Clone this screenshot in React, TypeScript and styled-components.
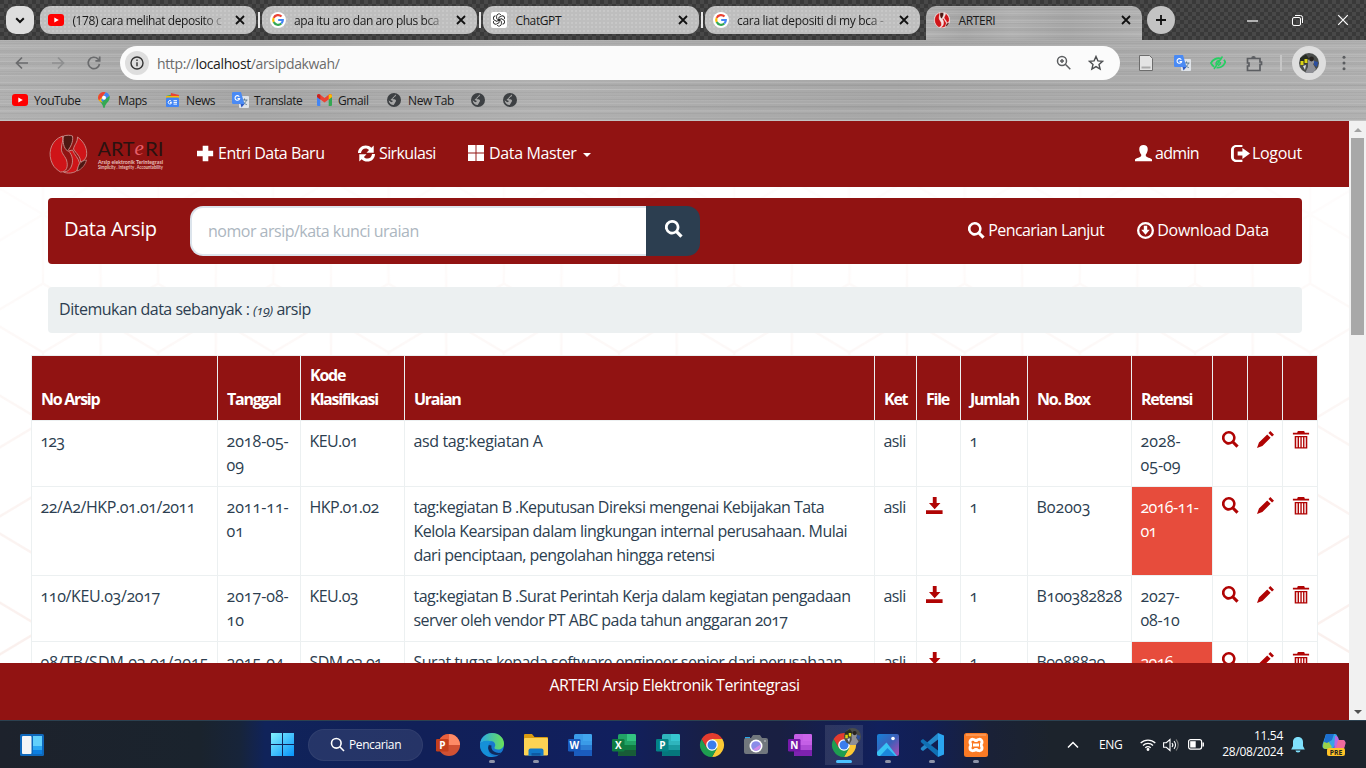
import React from "react";
import styled, { createGlobalStyle, css } from "styled-components";

const RED = "#911312";
const UI = `"Open Sans", "Noto Sans", sans-serif`;

const Global = createGlobalStyle`
  * { box-sizing: border-box; }
  html, body { margin: 0; padding: 0; overflow: hidden; }
  svg { display: block; flex: none; }
`;

const Screen = styled.div`
  width: 1366px;
  height: 768px;
  display: flex;
  flex-direction: column;
  overflow: hidden;
  font-family: ${UI};
`;

const brushed = css`
  background-color: #acacac;
  background-image:
    repeating-linear-gradient(180deg, rgba(255,255,255,.10) 0 1px, transparent 1px 3px, rgba(0,0,0,.04) 3px 4px, transparent 4px 7px),
    repeating-linear-gradient(180deg, rgba(0,0,0,.03) 0 2px, transparent 2px 5px, rgba(255,255,255,.07) 5px 6px, transparent 6px 11px),
    linear-gradient(90deg, rgba(255,255,255,.06), rgba(0,0,0,.03) 18%, rgba(255,255,255,.05) 40%, rgba(0,0,0,.03) 65%, rgba(255,255,255,.06));
`;

/* ---------- browser chrome ---------- */
const TabStrip = styled.div`
  height: 40px;
  flex: none;
  display: flex;
  padding: 6px 0 0 6px;
  background-color: #3b3b3b;
  background-image: conic-gradient(#484848 25%, #393939 0 50%, #484848 0 75%, #393939 0);
  background-size: 8px 8px;
`;
const RoundButton = styled.div<{ $round?: boolean }>`
  width: 28px;
  height: 28px;
  border-radius: ${p => (p.$round ? 14 : 10)}px;
  margin-left: ${p => (p.$round ? 5 : 0)}px;
  background: ${p => (p.$round ? "#c3c3c3" : "#dedede")};
  display: flex;
  align-items: center;
  justify-content: center;
`;
const Tab = styled.div<{ $active?: boolean; $sep?: boolean }>`
  position: relative;
  flex: none;
  width: 215.500px;
  height: ${p => (p.$active ? 34 : 28)}px;
  margin-left: 6px;
  padding: 0 11px ${p => (p.$active ? 6 : 0)}px 8px;
  display: flex;
  align-items: center;
  gap: 8px;
  font-size: 12px;
  color: #1a1a1a;
  border-radius: ${p => (p.$active ? "10px 10px 0 0" : "11px")};
  ${p => p.$active ? brushed : css`
    background: radial-gradient(circle at 1px 1px, #c8c8c8 .7px, transparent 1px) 0 0 / 4px 4px #bebebe;
  `}
  ${p => p.$sep && css`&::after {
    content: "";
    position: absolute;
    right: -4px;
    top: 6px;
    width: 2px;
    height: 16px;
    background: #e8e8e8;
  }`}
`;
const TabTitle = styled.span<{ $fade?: boolean; $ls?: number }>`
  flex: 1;
  white-space: nowrap;
  padding-left: 0.500px;
  letter-spacing: ${p => p.$ls ?? -0.4}px;
  ${p => p.$fade && css`mask-image: linear-gradient(90deg, #000 85%, transparent);`}
`;
const WinControls = styled.div`
  margin-left: auto;
  display: flex;
  align-items: center;
  gap: 34px;
  padding-right: 17px;
  height: 28px;
`;
const Chrome = styled.div`
  ${brushed}
  height: 81px;
  flex: none;
  border-bottom: 1px solid #c2c2c2;
`;
const Toolbar = styled.div`
  height: 46px;
  display: flex;
  align-items: center;
  padding: 0 0 0 14px;
`;
const NavButtons = styled.div`
  display: flex;
  flex: none;
  gap: 20px;
  width: 106px;
`;
const Omnibox = styled.div`
  width: 1000px;
  flex: none;
  height: 34px;
  border-radius: 17px;
  background: #fbfbfb;
  display: flex;
  align-items: center;
  padding: 0 16px 0 5px;
  font-size: 14px;
  color: #6b6b6b;
  letter-spacing: -0.37px;
  b { font-weight: 400; color: #1b1b1b; }
`;
const SiteInfo = styled.div`
  width: 24px;
  height: 24px;
  border-radius: 50%;
  background: #dedede;
  display: grid;
  place-items: center;
  margin-right: 8px;
`;
const OmniIcons = styled.div`
  margin-left: auto;
  display: flex;
  gap: 16px;
`;
const Extensions = styled.div`
  display: flex;
  align-items: center;
  flex: none;
  margin-left: 18px;
  gap: 19.500px;
`;
const Divider = styled.div`
  width: 2px;
  height: 16px;
  background: #c6c6c6;
  margin-left: -2px;
`;
const Avatar = styled.div`
  width: 34px;
  height: 34px;
  border-radius: 50%;
  background: #dedede;
  display: grid;
  place-items: center;
  margin-left: -10px;
  margin-right: -9px;
`;
const Bookmarks = styled.div`
  height: 28px;
  display: grid;
  grid-template-columns: 86px 67px 67px 85px 70px 84px 32px 32px;
  padding-left: 12px;
  align-items: center;
  font-size: 12px;
  letter-spacing: -0.4px;
  color: #1a1a1a;
`;
const Bookmark = styled.div<{ $gap?: number }>`
  display: flex;
  align-items: center;
  gap: ${p => p.$gap ?? 6}px;
  white-space: nowrap;
`;

/* ---------- page ---------- */
const Viewport = styled.div`
  height: 599px;
  flex: none;
  display: flex;
`;
const Page = styled.div`
  position: relative;
  width: 1349px;
  display: flex;
  flex-direction: column;
  overflow: hidden;
  background: #fff;
  color: #2c3e50;
  font-size: 16px;
  line-height: 24px;
  font-feature-settings: "onum" 1;
`;
const Backdrop = styled.svg`
  position: absolute;
  inset: 0;
`;
const Navbar = styled.nav`
  position: relative;
  height: 66px;
  flex: none;
  background: ${RED};
  color: #fff;
  display: flex;
  align-items: center;
  padding: 0 47px 2px 48px;
`;
const Brand = styled.div`
  width: 149px;
  display: flex;
  padding-top: 2px;
`;
const NavItem = styled.a<{ $w?: number; $ls?: number; $gap?: number }>`
  display: flex;
  align-items: center;
  gap: ${p => p.$gap ?? 4}px;
  white-space: nowrap;
  width: ${p => (p.$w ? p.$w + "px" : "auto")};
  letter-spacing: ${p => p.$ls ?? -0.5}px;
`;
const NavRight = styled.div`
  margin-left: auto;
  display: flex;
`;
const Caret = styled.span`
  border: 4px solid transparent;
  border-top-color: #fff;
  border-bottom: 0;
  margin: 4px 0 0 1px;
`;
const SearchBar = styled.div`
  position: relative;
  height: 66px;
  flex: none;
  margin: 11px 47px 0 48px;
  padding: 0 33px 0 16px;
  border-radius: 4px;
  background: ${RED};
  color: #fff;
  display: flex;
  align-items: center;
`;
const BarLinks = styled(NavRight)`
  padding-bottom: 2px;
`;
const BarTitle = styled.div`
  width: 126px;
  font-size: 20px;
  letter-spacing: -0.4px;
  white-space: nowrap;
  padding-bottom: 4px;
`;
const SearchInput = styled.div`
  width: 456px;
  height: 50px;
  border: 2px solid #dce4ec;
  border-right: 0;
  border-radius: 13px 0 0 13px;
  background: #fff;
  color: #acb6c0;
  padding: 11px 16px;
  letter-spacing: -0.5px;
`;
const SearchButton = styled.div`
  width: 54px;
  height: 50px;
  border-radius: 0 13px 13px 0;
  background: #2c3e50;
  display: flex;
  justify-content: center;
  padding: 14px 0 0 2px;
`;
const Notice = styled.div`
  position: relative;
  height: 46px;
  flex: none;
  margin: 23px 47px 0 48px;
  padding: 10px 11px;
  border-radius: 4px;
  background: #ecf0f1;
  letter-spacing: -0.48px;
  white-space: nowrap;
  i { font-size: 13.500px; }
`;
const Table = styled.div`
  position: relative;
  flex: none;
  width: 1287px;
  margin: 22px 0 0 31px;
  padding: 1px;
  display: grid;
  grid-template-columns: 185px 82px 103px 469px 41px 43px 66px 103px 80px 34px 34px 34px;
  grid-template-rows: 64px 65px 88px 65px 66px;
  gap: 1px;
  background: #ecf0f1;
`;
const HeadCell = styled.div`
  background: ${RED};
  color: #fff;
  font-weight: 700;
  letter-spacing: -1.250px;
  padding: 0 9px 9px;
  display: flex;
  align-items: flex-end;
`;
const Cell = styled.div<{ $overdue?: boolean; $ls?: number }>`
  background: ${p => (p.$overdue ? "#e74c3c" : "#fff")};
  color: ${p => (p.$overdue ? "#fff" : "inherit")};
  padding: 8px 8.500px;
  white-space: pre;
  letter-spacing: ${p => p.$ls ?? -0.6}px;
  overflow: hidden;
`;
const Line = styled.div`
  white-space: pre;
`;
const Footer = styled.footer`
  position: absolute;
  left: 0;
  right: 0;
  bottom: 0;
  height: 57px;
  padding-top: 10px;
  text-align: center;
  background: ${RED};
  color: #fff;
  letter-spacing: -0.43px;
`;
const Scrollbar = styled.div`
  width: 17px;
  background: #f1f1f1;
  display: flex;
  flex-direction: column;
  align-items: center;
  padding: 7px 0 6px;
`;
const Thumb = styled.div`
  width: 13px;
  height: 197px;
  margin: 6px 0 auto;
  background: #a8a8a8;
`;
const Arrow = styled.span<{ $down?: boolean }>`
  border: 4px solid transparent;
  ${p => p.$down ? "border-top-color:#505050;border-bottom:0;" : "border-bottom-color:#a3a3a3;border-top:0;"}
`;

/* ---------- taskbar ---------- */
const Taskbar = styled.div`
  height: 48px;
  flex: none;
  display: flex;
  align-items: center;
  border-top: 1px solid #2c4150;
  color: #fff;
  background: linear-gradient(90deg, #1d222c 0, #1a232d 200px, #17243a 240px, #10235a 265px, #112058 420px, #111f5e 620px, #191f43 720px, #191f42 780px, #11205c 880px, #121f53 930px, #1a2137 990px, #1c232c 1050px);
`;
const Widgets = styled.div`
  padding-left: 20px;
  width: 271px;
`;
const SearchPill = styled.div`
  margin: 0 3px 0 14px;
  width: 115px;
  height: 32px;
  border-radius: 16px;
  background: rgba(255,255,255,.09);
  border: 1px solid rgba(255,255,255,.05);
  display: flex;
  align-items: center;
  padding-left: 21px;
  gap: 4px;
  font-size: 12px;
  letter-spacing: -0.4px;
`;
const TaskApp = styled.div<{ $active?: boolean; $running?: boolean }>`
  position: relative;
  width: 44px;
  height: 47px;
  display: grid;
  place-items: center;
  ${p => p.$active && css`
    background: linear-gradient(rgba(255,255,255,.1), rgba(255,255,255,.1)) center / 38px 40px no-repeat;
  `}
  ${p => (p.$active || p.$running) && css`&::after {
    content: "";
    position: absolute;
    bottom: 5px;
    left: ${p.$active ? 14 : 19}px;
    width: ${p.$active ? 16 : 6}px;
    height: 3px;
    border-radius: 2px;
    background: ${p.$active ? "#4cc2ff" : "#8d93a8"};
  }`}
`;
const Tray = styled.div`
  margin-left: auto;
  display: flex;
  align-items: center;
  font-size: 12px;
  padding-right: 20px;
`;
const Lang = styled.span`
  margin: 0 17px 0 20px;
  letter-spacing: -0.3px;
  font-size: 12px;
  width: 24px;
`;
const Clock = styled.div`
  width: 70px;
  margin: 0 8px 0 9px;
  text-align: right;
  line-height: 16px;
  letter-spacing: -0.3px;
  padding-bottom: 1px;
`;

/* ---------- icons ---------- */
const CloseX = ({ s = 9, c = "#111", w = 1.8 }: { s?: number; c?: string; w?: number }) => (
  <svg width={s} height={s} viewBox="0 0 10 10"><path d="M1 1l8 8M9 1L1 9" stroke={c} strokeWidth={w} /></svg>
);
const YouTube = () => (
  <svg width="16" height="12" viewBox="0 0 16 12"><rect width="16" height="12" rx="3" fill="#f00" /><path d="M6.3 3.4v5.2L10.8 6z" fill="#fff" /></svg>
);
const Google = () => (
  <svg width="16" height="16" viewBox="0 0 16 16">
    <circle cx="8" cy="8" r="8" fill="#fff" />
    <g fill="none" strokeWidth="2.2">
      <path d="M11.5 4.6A4.8 4.8 0 0 0 3.7 5.9" stroke="#ea4335" />
      <path d="M3.7 5.9a4.8 4.8 0 0 0 0 4.2" stroke="#fbbc05" />
      <path d="M3.7 10.1a4.8 4.8 0 0 0 7.6 1.4" stroke="#34a853" />
      <path d="M11.3 11.5A4.6 4.6 0 0 0 12.8 8H8.2" stroke="#4285f4" />
    </g>
  </svg>
);
const OpenAI = () => (
  <svg width="16" height="16" viewBox="0 0 16 16">
    <rect width="16" height="16" rx="2" fill="#fff" />
    <g fill="none" stroke="#222" strokeWidth=".9">
      {[0, 60, 120, 180, 240, 300].map(a => (
        <path key={a} transform={`rotate(${a} 8 8)`} d="M5.6 6.7V4.2a2.4 2.4 0 0 1 4.3-1.4M5.6 6.7l3 1.8" />
      ))}
    </g>
  </svg>
);
const ArteriMark = ({ s = 16, outline = "#fff" }: { s?: number; outline?: string }) => (
  <svg width={s} height={s} viewBox="0 0 40 40">
    {outline === "#fff" && <circle cx="20" cy="20" r="20" fill="#f3e4e2" />}
    <path d="M10 4C2 9-1 20 4 30c2 4 5 6 8 8 6 0 8-5 6-12-2-5-6-7-5-13 0-3 2-6 1-11z" fill="#cf1418" stroke={outline} strokeWidth=".9" />
    <path d="M15 2c3-1 7-1 9 0 1 6-2 11-5 15-4-3-5-9-4-15z" fill="#4d1712" stroke={outline} strokeWidth=".9" />
    <path d="M29 3c7 5 10 12 9 19-1 3-3 5-6 6 0-6-4-8-7-13 1-5 4-6 4-12z" fill="#cf1418" stroke={outline} strokeWidth=".9" />
    <path d="M20 17c4 4 5 10 3 15-1 3-4 6-8 6 4 2 10 1 13-1 1-2 2-5 3-8-1-5-5-8-7-13z" fill="#cf1418" stroke={outline} strokeWidth=".9" />
    <path d="M38 26c-1 5-5 9-9 11 0-6 3-10 9-11z" fill="#4d1712" stroke={outline} strokeWidth=".7" />
  </svg>
);
const Translate = () => (
  <svg width="17" height="16" viewBox="0 0 17 16">
    <rect x="7" y="4" width="10" height="12" rx="1" fill="#dfe3e8" />
    <path d="M9.5 8h6M12.5 6.5V8M14.4 8c-.5 2.2-2 3.8-4 4.6M11 9.4c.7 1.5 2 2.6 3.8 3.2" stroke="#5f7f95" strokeWidth="1" fill="none" />
    <path d="M1.2 0H9l3.4 12H1.2A1.2 1.2 0 0 1 0 10.800V1.200A1.2 1.2 0 0 1 1.200 0z" fill="#4a8af4" />
    <path d="M8.500 12h4L9.500 15.500z" fill="#2f5bc4" />
    <path d="M7.300 4.700A2.300 2.300 0 1 0 7.600 6.500H5.500" fill="none" stroke="#fff" strokeWidth="1.100" />
  </svg>
);
const Maps = () => (
  <svg width="12" height="16" viewBox="0 0 12 16">
    <path d="M1.200 8.500C2.500 10.500 4.800 12 5.300 15.500c.2.700 1.200.700 1.400 0C7.200 12 9.500 10.500 10.800 8.500z" fill="#34a853" />
    <path d="M0 6a6 6 0 0 1 1.500-4L9 8 6 11.500 1.200 9A6 6 0 0 1 0 6z" fill="#fbbc04" />
    <path d="M1.400 2A6 6 0 0 1 7.800.300L4 5z" fill="#ea4335" />
    <path d="M0 6a6 6 0 0 1 1.400-4L4.500 4.500 1 8.500A6 6 0 0 1 0 6z" fill="#ea4335" />
    <path d="M7.800.300A6 6 0 0 1 11.500 3.800L5 11 3 8z" fill="#4285f4" />
    <path d="M11.500 3.800A6 6 0 0 1 10.500 9L6.500 13 4 10z" fill="#34a853" />
    <circle cx="6" cy="5.800" r="2" fill="#fff" />
  </svg>
);
const News = () => (
  <svg width="15" height="14" viewBox="0 0 15 14">
    <path d="M1 3l8-2 1 8-8 2z" fill="#34a853" /><path d="M6 0l8 2-1 8-8-2z" fill="#ea4335" /><path d="M1 3h13v6H1z" fill="#fbbc04" />
    <rect x="1" y="4.500" width="13" height="9.500" rx="1" fill="#4285f4" />
    <path d="M6.300 8.300A1.700 1.700 0 1 0 6.600 9.500H5M8.500 7.700h3.500M8.500 9.400h3.500M8.500 11.100h3.500" stroke="#fff" fill="none" />
  </svg>
);
const Gmail = () => (
  <svg width="15" height="12" viewBox="0 0 15 12">
    <path d="M0 2h3.300v10H1a1 1 0 0 1-1-1z" fill="#4285f4" /><path d="M11.700 2H15v9a1 1 0 0 1-1 1h-2.300z" fill="#34a853" />
    <path d="M0 1.800C0 .200 1.700-.500 3 .500l4.500 3.400L12 .500c1.300-1 3-.300 3 1.300V3L7.500 8.600 0 3z" fill="#ea4335" />
    <path d="M11.700.700C13-.300 15 .200 15 1.800V3l-3.300 2.500z" fill="#fbbc04" /><path d="M3.300.700C2-.300 0 .200 0 1.800V3l3.300 2.500z" fill="#c5221f" />
  </svg>
);
const Globe = () => (
  <svg width="14" height="14" viewBox="0 0 14 14">
    <circle cx="7" cy="7" r="7" fill="#3d4043" />
    <path d="M8.700 1.600c.6 1.200 0 2-1.500 2.300-.1 1.500-1.400 1.200-1.800 2.100.9.700 2.700-.2 3.500 1.200.6 1-.6 1.500-.8 2.600L6.700 12C4 12 2 10.200 1.600 7.300l2.600 1.900 1.400-.4V7.700L3.500 6.900" fill="#b4b4b4" opacity=".9" />
  </svg>
);
const AvatarPic = ({ s = 20 }: { s?: number }) => (
  <svg width={s} height={s} viewBox="0 0 20 20">
    <circle cx="10" cy="10" r="10" fill="#4a4d4b" />
    <path d="M1 5l6-3.500 3 4-2 5H1z" fill="#272c22" /><path d="M1.500 8h3v4h-3zM5.500 6h3v4h-3z" fill="#dcd417" />
    <path d="M9 7l4-2 3 4-2 2 3 5-3 4H6l3-6z" fill="#8f9096" /><circle cx="12.500" cy="6" r="2.400" fill="#26221f" />
    <path d="M15 8l4 1-1 5-3-2z" fill="#2c4fa0" /><path d="M4 13l3-1-1 5z" fill="#d8dde8" />
  </svg>
);

/* page glyphs, all on a 20 unit grid */
const GLYPHS: Record<string, React.ReactNode> = {
  plus: <path d="M6.700 1h6.600v5.700H19v6.600h-5.700V19H6.700v-5.700H0V6.700h6.700z" />,
  refresh: <><path d="M0 9.500C0 4.300 4 .500 9 .500c2.700 0 5 1 6.700 2.700L18.500.500V9H10l3-3C12 4.700 10.700 4 9 4 6 4 4 6.200 3.500 9.500z" /><path d="M20 10.500c0 5.200-4 9-9 9-2.700 0-5-1-6.700-2.700L1.500 19.500V11H10l-3 3c1 1.300 2.300 2 4 2 3 0 5-2.200 5.500-5.500z" /></>,
  grid: <path d="M0 0h9.400v9.400H0zM10.600 0H20v9.400h-9.400zM0 10.600h9.400V20H0zM10.600 10.600H20V20h-9.400z" />,
  user: <path d="M10 0c3 0 5 1.800 5 4.800 0 2.700-1 5-2.300 6.300v1.700c0 .9 6.300 2.800 7.300 4.200V19H0v-2c1-1.400 7.300-3.300 7.300-4.200v-1.700C6 9.800 5 7.500 5 4.800 5 1.800 7 0 10 0z" />,
  logout: <><path d="M12 3.200V1H5C2.500 1 0 3.500 0 6v8c0 2.500 2.500 5 5 5h7v-2.400H5.500C4 16.600 3 15.500 3 14.200V5.800C3 4.500 4 3.200 5.500 3.200z" /><path d="M12 4.300l8 5.700-8 5.700v-3.700H7V8h5z" /></>,
  search: <path fillRule="evenodd" d="M8 0a8 8 0 0 1 6.700 12.300l4.900 4.800-2.600 2.600-4.900-4.900A8 8 0 1 1 8 0zm0 3a5 5 0 1 0 0 10A5 5 0 0 0 8 3z" />,
  downloadCircle: <path fillRule="evenodd" d="M10 0a10 10 0 1 1 0 20 10 10 0 0 1 0-20zm0 2.700a7.300 7.300 0 1 0 0 14.600 7.300 7.300 0 0 0 0-14.600zM8 4.500h4V9h3l-5 6-5-6h3z" />,
  save: <path d="M8 0h4.500v7H17l-6.800 7.500L3.500 7H8zM0 15.500h19.500V20H0z" />,
  pencil: <path d="M2.300 13.500L12 4l4 4-9.700 9.700L0 20zM13.500 2.300L15.700 0 20 4.300l-2.300 2.200z" />,
  trash: <path fillRule="evenodd" d="M6.500 0h7l.8 2H19v2H1V2h4.700zM3 5.500h14V19.500H3zm1.700 1.500v11h1.500V7zm3.100 0v11h1.500V7zm3 0v11h1.500V7zm3 0v11h1.500V7z" />,
};
const Glyph = ({ name, s = 17, c = "currentColor" }: { name: string; s?: number; c?: string }) => (
  <svg width={s} height={s} viewBox="0 0 20 20" fill={c}>{GLYPHS[name]}</svg>
);

const Logo = () => (
  <svg width="120" height="42" viewBox="0 0 120 42" fontFamily="Lato, sans-serif" overflow="visible">
    <svg x="0.500" y="1" width="40" height="40"><ArteriMark s={40} outline="#c98f8b" /></svg>
    <g fontSize="18.500">
      <text x="49.500" y="22.500" fill="#2a1210" textLength="37" lengthAdjust="spacingAndGlyphs">ART</text>
      <text x="86.500" y="21.500" fill="#e6606a" fontStyle="italic" fontSize="21" fontFamily="Liberation Serif, serif">e</text>
      <text x="97" y="22.500" fill="#2a1210" textLength="18.500" lengthAdjust="spacingAndGlyphs">RI</text>
    </g>
    <g fontSize="4.600" fontWeight="700">
      <text x="50" y="30.500" fill="#e8c0bd" textLength="65" lengthAdjust="spacingAndGlyphs">Arsip elektronik Terintegrasi</text>
      <text x="50" y="36" fill="#e8c0bd" textLength="65" lengthAdjust="spacingAndGlyphs">Simplicity . Integrity . Accountability</text>
    </g>
  </svg>
);

/* taskbar artwork */
const Office = ({ letter, dark, cols, round }: { letter: string; dark: string; cols: string[]; round?: boolean }) => (
  <svg width="24" height="22" viewBox="0 0 24 22">
    {round ? (
      <><circle cx="13" cy="11" r="11" fill={cols[2]} /><path d="M13 0a11 11 0 0 1 11 11H13z" fill={cols[0]} /><path d="M13 0v11H2A11 11 0 0 1 13 0z" fill={cols[1]} /></>
    ) : (
      <><rect x="6" width="18" height="22" rx="1.500" fill={cols[1]} /><path d="M15 0h7.500A1.500 1.500 0 0 1 24 1.500V7h-9z" fill={cols[0]} /><path d="M6 11h18v5H6z" fill={cols[2]} /><path d="M6 16h18v4.500a1.500 1.500 0 0 1-1.500 1.500h-15A1.500 1.500 0 0 1 6 20.500z" fill={cols[3]} /></>
    )}
    <rect y="5" width="12.500" height="12.500" rx="1.200" fill={dark} />
    <text x="6.300" y="14.800" textAnchor="middle" fontSize="10" fontWeight="700" fill="#fff">{letter}</text>
  </svg>
);
const Edge = () => (
  <svg width="24" height="24" viewBox="0 0 24 24">
    <defs><linearGradient id="eg" x1="0" x2="1"><stop offset="0" stopColor="#2aa7e8" /><stop offset="1" stopColor="#6be256" /></linearGradient></defs>
    <circle cx="12" cy="12" r="12" fill="#1779cf" />
    <path d="M0 11C1 4 6 0 12 0c7 0 12 5 12 10.500 0 4-3 6-6 6-2.500 0-4-1-3.500-2 2-3 0-6.500-4-6.500C5 8 1 8.500 0 11z" fill="url(#eg)" />
    <path d="M8.500 12c-2 6 3 10 8 10 3 0 5-1.500 6-3-3 1.500-6 1-8.500-.5-2.500-1.700-3-4-2.500-6z" fill="#10295c" />
    <path d="M8.500 12c-2 7 3 12 6 11.600C6 25.500 0 19 0 12c1-3 4-4.200 7-4.200 2 0 3.500.3 4.500 1-1.500.7-2.500 1.700-3 3.200z" fill="#1590d8" />
  </svg>
);
const Explorer = () => (
  <svg width="24" height="22" viewBox="0 0 24 22"><path d="M0 1a1 1 0 0 1 1-1h7l2.500 3H23a1 1 0 0 1 1 1v6H0z" fill="#d99a10" /><rect y="4" width="24" height="17.500" rx="1.200" fill="#fcd354" /><path d="M4.500 16.500a2 2 0 0 1 2-2h11a2 2 0 0 1 2 2v5.200h-15z" fill="#1179c9" /><path d="M7.500 19h9v2.700h-9z" fill="#0d5aa3" /></svg>
);
const ChromeLogo = ({ pic }: { pic?: boolean }) => (
  <svg width="30" height="30" viewBox="-3 -3 30 30" overflow="visible">
    <path d="M12 12V0l10.400 6A12 12 0 0 1 12 24l5-9z" fill="#fcc934" />
    <path d="M1.600 6A12 12 0 0 0 12 24l5.200-9H7z" fill="#1e9e50" /><path d="M1.600 6A12 12 0 0 1 22.400 6H12l-5 9z" fill="#e33b2e" />
    <circle cx="12" cy="12" r="5.800" fill="#fff" /><circle cx="12" cy="12" r="4.500" fill="#3b7ded" />
    {pic && <svg x="12" y="-5" width="17" height="17"><AvatarPic s={17} /></svg>}
  </svg>
);
const Camera = () => (
  <svg width="24" height="22" viewBox="0 0 24 22"><path d="M1 3h5v3H1z" fill="#28a8ea" /><path d="M2 4h5l2-3h7l2 3h4a2 2 0 0 1 2 2v12a2 2 0 0 1-2 2H2a2 2 0 0 1-2-2V6a2 2 0 0 1 2-2z" fill="#71777d" /><circle cx="12" cy="12" r="6.500" fill="#fff" /><circle cx="12" cy="12" r="4.800" fill="#8b8ce8" /><path d="M9 15.500a4.800 4.800 0 0 0 7.500-5z" fill="#d18ae8" /><circle cx="21" cy="7" r=".8" fill="#cfd2d5" /></svg>
);
const Photos = () => (
  <svg width="22" height="22" viewBox="0 0 22 22"><defs><linearGradient id="ph" x1="0" y1="0" x2="1" y2="1"><stop offset="0" stopColor="#1581d8" /><stop offset=".5" stopColor="#3c5fb8" /><stop offset="1" stopColor="#b04bb4" /></linearGradient></defs>
    <rect width="22" height="22" rx="2" fill="url(#ph)" /><path d="M0 18L9.500 8.500 20 22H2a2 2 0 0 1-2-2z" fill="#38c3f5" /><path d="M3 22l7.500-8 8 8z" fill="#1b87dc" /><circle cx="16" cy="4.500" r="1.800" fill="#fff" /></svg>
);
const VSCode = () => (
  <svg width="24" height="24" viewBox="0 0 24 24"><path d="M18 0l6 2.600v18.800L18 24z" fill="#2aa5f0" /><path d="M18 0v6.500L3 18 .800 16.500V15z" fill="#2489ca" /><path d="M18 24v-6.500L3 6 .800 7.500V9z" fill="#1070b3" /></svg>
);
const Xampp = () => (
  <svg width="24" height="24" viewBox="0 0 24 24"><rect width="24" height="24" rx="2.500" fill="#fb7a24" /><path d="M2 2h20" stroke="#fdb07a" strokeWidth="1" /><path d="M6 9c0-4 6-3 6 0 0-3 6-4 6 0 0 2-1.500 3-2 3 .5 0 2 1 2 3 0 4-6 3-6 0 0 3-6 4-6 0 0-2 1.500-3 2-3-.500 0-2-1-2-3z" fill="none" stroke="#fff" strokeWidth="3" /><path d="M9 12h6" stroke="#fff" strokeWidth="3" /></svg>
);

/* ---------- data ---------- */
type Row = { no: string; noLs: number; tgl: string[]; kode: string; uraian: string[]; uLs?: number; file?: boolean; box: string; boxLs?: number; ret: string[]; retLs?: number; overdue?: boolean };
const ROWS: Row[] = [
  { no: "123", noLs: -0.9, tgl: ["2018-05-", "09"], kode: "KEU.01", uraian: ["asd tag:kegiatan A"], uLs: -0.37, box: "", ret: ["2028-", "05-09"], retLs: 0 },
  { no: "22/A2/HKP.01.01/2011", noLs: -0.43, tgl: ["2011-11-", "01"], kode: "HKP.01.02", uraian: ["tag:kegiatan B .Keputusan Direksi mengenai Kebijakan Tata", "Kelola Kearsipan dalam lingkungan internal perusahaan. Mulai", "dari penciptaan, pengolahan hingga retensi"], file: true, box: "B02003", boxLs: 0, ret: ["2016-11-", "01"], overdue: true },
  { no: "110/KEU.03/2017", noLs: -0.36, tgl: ["2017-08-", "10"], kode: "KEU.03", uraian: ["tag:kegiatan B .Surat Perintah Kerja dalam kegiatan pengadaan", "server oleh vendor PT ABC pada tahun anggaran 2017"], file: true, box: "B100382828", boxLs: -0.35, ret: ["2027-", "08-10"], retLs: -0.2 },
  { no: "08/TB/SDM.03.01/2015", noLs: 0.05, tgl: ["2015-04-", "01"], kode: "SDM.03.01", uraian: ["Surat tugas kepada software engineer senior dari perusahaan", "vendor"], file: true, box: "B9088829", boxLs: -0.35, ret: ["2016-", "04-01"], overdue: true },
];
const HEADS = ["No Arsip", "Tanggal", "Kode\nKlasifikasi", "Uraian", "Ket", "File", "Jumlah", "No. Box", "Retensi", "", "", ""];
const HeadText = styled.span`white-space: pre;`;
const IconCell = styled(Cell)`
  padding: 10px 9px;
  color: #b00404;
`;

export default function App() {
  return (
    <Screen>
      <Global />
      <TabStrip>
        <RoundButton><svg width="10" height="7" viewBox="0 0 10 7"><path d="M1.200 1.200L5 5l3.800-3.800" fill="none" stroke="#111" strokeWidth="2" /></svg></RoundButton>
        <Tab $sep><YouTube /><TabTitle $fade $ls={-0.42}>(178) cara melihat deposito c</TabTitle><CloseX s={10} /></Tab>
        <Tab $sep><Google /><TabTitle $fade>apa itu aro dan aro plus bca</TabTitle><CloseX s={10} /></Tab>
        <Tab $sep><OpenAI /><TabTitle>ChatGPT</TabTitle><CloseX s={10} /></Tab>
        <Tab><Google /><TabTitle $fade $ls={-0.3}>cara liat depositi di my bca -</TabTitle><CloseX s={10} /></Tab>
        <Tab $active><ArteriMark /><TabTitle>ARTERI</TabTitle><CloseX s={10} /></Tab>
        <RoundButton $round><svg width="12" height="12" viewBox="0 0 12 12"><path d="M6 1v10M1 6h10" stroke="#111" strokeWidth="1.800" /></svg></RoundButton>
        <WinControls>
          <svg width="11" height="11" viewBox="0 0 11 11"><path d="M0 6h11" stroke="#fff" strokeWidth="1.200" /></svg>
          <svg width="11" height="11" viewBox="0 0 11 11" fill="none" stroke="#fff"><rect x=".5" y="2.500" width="8" height="8" rx="1.500" /><path d="M3 .500h5.500a2 2 0 0 1 2 2V8" /></svg>
          <CloseX s={12} c="#fff" w={1} />
        </WinControls>
      </TabStrip>
      <Chrome>
        <Toolbar>
          <NavButtons>
            <svg width="16" height="16" viewBox="0 0 16 16" fill="none" stroke="#6a6b6d" strokeWidth="1.700"><path d="M14 8H3M8 2.500L2.500 8 8 13.500" /></svg>
            <svg width="16" height="16" viewBox="0 0 16 16" fill="none" stroke="#8e8f90" strokeWidth="1.700"><path d="M2 8h11M8 2.500L13.500 8 8 13.500" /></svg>
            <svg width="16" height="16" viewBox="0 0 16 16" fill="none" stroke="#6a6b6d" strokeWidth="1.700"><path d="M13.500 9A5.700 5.700 0 1 1 12 4L13.500 5.500M13.700 1.500v4.300H9.400" /></svg>
          </NavButtons>
          <Omnibox>
            <SiteInfo><svg width="14" height="14" viewBox="0 0 14 14" fill="none" stroke="#333" strokeWidth="1.400"><circle cx="7" cy="7" r="6" /><path d="M7 6.300v4M7 3.500v1.500" /></svg></SiteInfo>
            <span>http://<b>localhost</b>/arsipdakwah/</span>
            <OmniIcons>
              <svg width="16" height="16" viewBox="0 0 16 16" fill="none" stroke="#5c5e60" strokeWidth="1.500"><circle cx="6" cy="6" r="4.500" /><path d="M9.300 9.300l5 5M6 4v4M4 6h4" /></svg>
              <svg width="16" height="16" viewBox="0 0 16 16" fill="none" stroke="#4c4e50" strokeWidth="1.400"><path d="M8 1.500l1.900 4.400 4.700.4-3.600 3.100 1.100 4.700L8 11.600l-4.100 2.500L5 9.400 1.400 6.300l4.700-.4z" /></svg>
            </OmniIcons>
          </Omnibox>
          <Extensions>
            <svg width="16" height="16" viewBox="0 0 16 16"><path d="M1.500.500h10l3 3v12h-13z" fill="#e3e3e3" stroke="#6d6d6d" /><path d="M3.500 11.500h9v2h-9z" fill="#aaa" /></svg>
            <Translate />
            <svg width="16" height="14" viewBox="0 0 16 14" fill="none" stroke="#26cf62" strokeWidth="1.800"><path d="M11.500 2.800C6.500 1 2.500 4 1 7c1 2 2 3 3.200 3.800M14 3.800L15.300 6C13.500 10.500 9.500 12 6.500 11.500" /><path d="M12.500 .5L4 13M9 4.500C6 5 5.500 8 6.500 9M10.500 6c0 2-.8 3-2.500 3.500" strokeWidth="1.500" /></svg>
            <svg width="17" height="17" viewBox="0 0 17 17" fill="none" stroke="#5c5e62" strokeWidth="1.700"><path d="M1.500 3.500H14V7h1.500v2.500H14v6H1.500V11H3V8H1.500zM6 3.300c0-2 3-2 3 0" /></svg>
            <Divider />
            <Avatar><AvatarPic /></Avatar>
            <svg width="16" height="16" viewBox="0 0 16 16" fill="#5a5c5f"><circle cx="8" cy="2.300" r="1.500" /><circle cx="8" cy="8" r="1.500" /><circle cx="8" cy="13.700" r="1.500" /></svg>
          </Extensions>
        </Toolbar>
        <Bookmarks>
          <Bookmark><YouTube />YouTube</Bookmark>
          <Bookmark $gap={8}><Maps />Maps</Bookmark>
          <Bookmark><News />News</Bookmark>
          <Bookmark $gap={5}><Translate />Translate</Bookmark>
          <Bookmark><Gmail />Gmail</Bookmark>
          <Bookmark $gap={7}><Globe />New Tab</Bookmark>
          <Bookmark><Globe /></Bookmark>
          <Bookmark><Globe /></Bookmark>
        </Bookmarks>
      </Chrome>
      <Viewport>
        <Page>
          <Backdrop width="1349" height="599">
            <defs>
              <pattern id="hex" x="43" y="-10" width="115.200" height="207" patternUnits="userSpaceOnUse">
                <path d="M0 34.500V172.500M115.200 34.500V172.500M57.600 138V207M57.600 0V69M0 34.500L57.600 0M115.200 34.500L57.600 0M0 172.500L57.600 207M115.200 172.500L57.600 207M57.600 69L115.200 103.500L57.600 138L0 103.500Z" fill="none" stroke="#e9b9ac" strokeWidth="2.500" />
              </pattern>
              <linearGradient id="fade" x1="0" y1="0" x2="0" y2="1"><stop offset=".15" stopColor="#fff" stopOpacity=".04" /><stop offset="1" stopColor="#fff" stopOpacity=".24" /></linearGradient>
              <mask id="m"><rect width="1349" height="599" fill="url(#fade)" /></mask>
            </defs>
            <rect width="1349" height="599" fill="url(#hex)" mask="url(#m)" />
          </Backdrop>
          <Navbar>
            <Brand><Logo /></Brand>
            <NavItem $w={161}><Glyph name="plus" />Entri Data Baru</NavItem>
            <NavItem $w={110} $ls={-0.6}><Glyph name="refresh" />Sirkulasi</NavItem>
            <NavItem $gap={5} $ls={-0.35}><Glyph name="grid" s={16} />Data Master<Caret /></NavItem>
            <NavRight>
              <NavItem $w={96} $gap={3} $ls={-0.7}><Glyph name="user" />admin</NavItem>
              <NavItem $gap={2} $ls={-0.3}><Glyph name="logout" s={19} />Logout</NavItem>
            </NavRight>
          </Navbar>
          <SearchBar>
            <BarTitle>Data Arsip</BarTitle>
            <SearchInput>nomor arsip/kata kunci uraian</SearchInput>
            <SearchButton><Glyph name="search" s={18} /></SearchButton>
            <BarLinks>
              <NavItem $w={169} $gap={3} $ls={-0.57}><Glyph name="search" />Pencarian Lanjut</NavItem>
              <NavItem $gap={3} $ls={-0.25}><Glyph name="downloadCircle" />Download Data</NavItem>
            </BarLinks>
          </SearchBar>
          <Notice>Ditemukan data sebanyak : <i>(19)</i> arsip</Notice>
          <Table>
            {HEADS.map((h, i) => <HeadCell key={i}><HeadText>{h}</HeadText></HeadCell>)}
            {ROWS.map(r => (
              <React.Fragment key={r.no}>
                <Cell $ls={r.noLs}>{r.no}</Cell>
                <Cell $ls={-0.05}>{r.tgl.map(t => <Line key={t}>{t}</Line>)}</Cell>
                <Cell>{r.kode}</Cell>
                <Cell $ls={r.uLs ?? -0.53}>{r.uraian.map(t => <Line key={t}>{t}</Line>)}</Cell>
                <Cell>asli</Cell>
                <IconCell>{r.file && <Glyph name="save" />}</IconCell>
                <Cell>1</Cell>
                <Cell $ls={r.boxLs}>{r.box}</Cell>
                <Cell $overdue={r.overdue} $ls={r.retLs}>{r.ret.map(t => <Line key={t}>{t}</Line>)}</Cell>
                <IconCell><Glyph name="search" /></IconCell>
                <IconCell><Glyph name="pencil" /></IconCell>
                <IconCell><Glyph name="trash" s={18} /></IconCell>
              </React.Fragment>
            ))}
          </Table>
          <Footer>ARTERI Arsip Elektronik Terintegrasi</Footer>
        </Page>
        <Scrollbar><Arrow /><Thumb /><Arrow $down /></Scrollbar>
      </Viewport>
      <Taskbar>
        <Widgets>
          <svg width="24" height="22" viewBox="0 0 24 22"><rect width="24" height="22" rx="1.500" fill="#0f68bb" /><rect x="2" y="2" width="9.500" height="18" rx="1" fill="#f4f5f6" /><path d="M13 2h9v10h-9z" fill="#62d0fb" /><path d="M13 12h9v4h-9z" fill="#2ba8f3" /><path d="M13 16h9v4h-9z" fill="#0c7ee0" /></svg>
        </Widgets>
        <svg width="23" height="23" viewBox="0 0 23 23"><defs><linearGradient id="wn" x1="0" y1="0" x2="1" y2="1"><stop offset="0" stopColor="#83f1ff" /><stop offset="1" stopColor="#0693fa" /></linearGradient></defs><path d="M0 0h11v11H0zM12 0h11v11H12zM0 12h11v11H0zM12 12h11v11H12z" fill="url(#wn)" /></svg>
        <SearchPill>
          <svg width="15" height="15" viewBox="0 0 15 15" fill="none" stroke="#fff" strokeWidth="1.600"><circle cx="6.300" cy="6.300" r="4.800" /><path d="M9.800 9.800l4.200 4.200" /></svg>
          Pencarian
        </SearchPill>
        <TaskApp><Office letter="P" dark="#c43e1c" cols={["#fd8a66", "#e9603d", "#d15133"]} round /></TaskApp>
        <TaskApp $running><Edge /></TaskApp>
        <TaskApp $running><Explorer /></TaskApp>
        <TaskApp><Office letter="W" dark="#185abd" cols={["#41a5ee", "#3a9be8", "#2b7cd3", "#1a5cbe"]} /></TaskApp>
        <TaskApp><Office letter="X" dark="#107c41" cols={["#33c481", "#21a366", "#107c41", "#185c37"]} /></TaskApp>
        <TaskApp><Office letter="P" dark="#038387" cols={["#37c6d0", "#2fb5bd", "#1a9ba1", "#05777c"]} /></TaskApp>
        <TaskApp><ChromeLogo /></TaskApp>
        <TaskApp><Camera /></TaskApp>
        <TaskApp><Office letter="N" dark="#7719aa" cols={["#ca64ea", "#c45fe6", "#ae4bd5", "#7d22b0"]} /></TaskApp>
        <TaskApp $active><ChromeLogo pic /></TaskApp>
        <TaskApp $running><Photos /></TaskApp>
        <TaskApp $running><VSCode /></TaskApp>
        <TaskApp $running><Xampp /></TaskApp>
        <Tray>
          <svg width="12" height="8" viewBox="0 0 12 8"><path d="M1 6.500l5-5 5 5" fill="none" stroke="#fff" strokeWidth="1.500" /></svg>
          <Lang>ENG</Lang>
          <svg width="16" height="13" viewBox="0 0 16 13" fill="none" stroke="#fff" strokeWidth="1.300"><path d="M.700 5a10.500 10.500 0 0 1 14.600 0M3 7.500a7 7 0 0 1 10 0M5.300 9.800a4 4 0 0 1 5.400 0" /><circle cx="8" cy="11.500" r=".8" fill="#fff" /></svg>
          <svg width="24" height="14" viewBox="-7 0 24 14" fill="none" stroke="#fff" strokeWidth="1.100"><path d="M.600 4.700h2.700L7 1.500v11L3.300 9.300H.600zM9 5a3 3 0 0 1 0 4M11 3.200a5.500 5.500 0 0 1 0 7.600" /><path d="M13 1.500a8 8 0 0 1 0 11" stroke="#777" /></svg>
          <svg width="24" height="11" viewBox="-8 0 24 11"><rect x=".6" y=".6" width="13" height="9.500" rx="2" fill="none" stroke="#fff" strokeWidth="1.200" /><rect x="2.200" y="2.200" width="5.500" height="6.300" fill="#fff" /><path d="M15.200 3.500v4" stroke="#fff" strokeWidth="1.500" /></svg>
          <Clock>11.54<br />28/08/2024</Clock>
          <svg width="14" height="16" viewBox="0 0 14 16" fill="#7fe0fc"><path d="M7 0c3.300 0 5 2.300 5 5v4l1.800 3.500H.200L2 9V5c0-2.700 1.700-5 5-5zM4.500 13.500h5a2.500 2 0 0 1-5 0z" /></svg>
          <svg width="41" height="24" viewBox="-17 0 41 24"><path d="M4 1h9c1.500 0 2 1 2.500 3L13 12c-1 3-2 4-4 4H4C0 16 0 13 1 10z" fill="#37a5e6" /><path d="M2 9l4-1 4 6-2 2H4c-3 0-4-2-2-7z" fill="#9bd149" /><path d="M4 1h8l-2 6-5 3-3-1z" fill="#1c6fd0" /><path d="M13 3c3 0 3 1 4 4h3c3 0 4 2 3 5l-2 5h-9z" fill="#b76ae6" /><path d="M16 7h4c3 0 4 2 3 5l-1 4-8-1z" fill="#f06a9c" /><rect x="5" y="15" width="18" height="8" rx="2" fill="#ffc328" /><text x="14" y="21.500" fontSize="6.800" fontWeight="700" textAnchor="middle" fill="#222">PRE</text></svg>
        </Tray>
      </Taskbar>
    </Screen>
  );
}
